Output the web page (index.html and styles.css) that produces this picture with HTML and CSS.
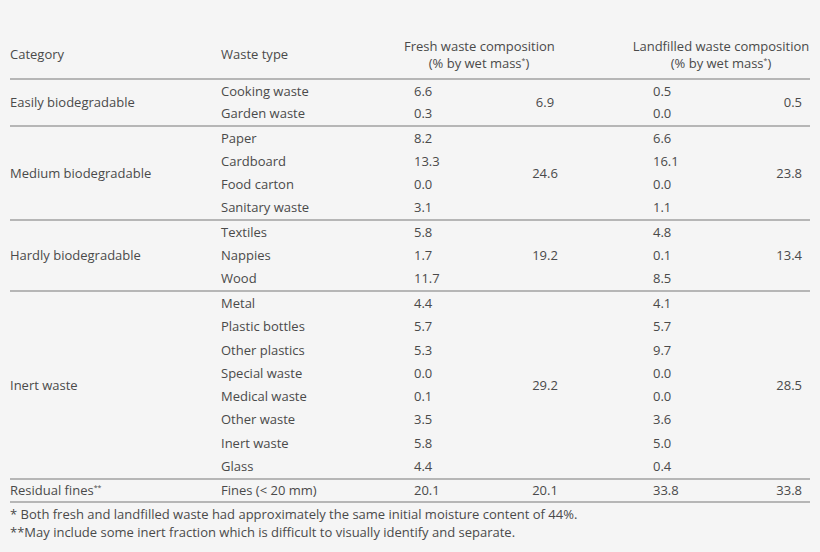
FILE: index.html
```html
<!DOCTYPE html>
<html lang="en">
<head>
<meta charset="utf-8">
<title>Waste composition</title>
<link rel="stylesheet" href="styles.css">
</head>
<body>
<div class="page">
  <div class="comp">
    <div class="row head">
      <div class="cell">Category</div>
      <div class="cell">Waste type</div>
      <div class="cell h-fresh">Fresh waste composition<br>(% by wet mass<sup>*</sup>)</div>
      <div class="cell h-land">Landfilled waste composition<br>(% by wet mass<sup>*</sup>)</div>
    </div>
    <div class="grp g2">
      <div class="cell cat">Easily biodegradable</div>
      <div class="cell fsub">6.9</div>
      <div class="cell lsub">0.5</div>
      <div class="cell">Cooking waste</div><div class="cell ind">6.6</div><div class="cell lind">0.5</div>
      <div class="cell">Garden waste</div><div class="cell ind">0.3</div><div class="cell lind">0.0</div>
    </div>
    <div class="grp g4">
      <div class="cell cat">Medium biodegradable</div>
      <div class="cell fsub">24.6</div>
      <div class="cell lsub">23.8</div>
      <div class="cell">Paper</div><div class="cell ind">8.2</div><div class="cell lind">6.6</div>
      <div class="cell">Cardboard</div><div class="cell ind">13.3</div><div class="cell lind">16.1</div>
      <div class="cell">Food carton</div><div class="cell ind">0.0</div><div class="cell lind">0.0</div>
      <div class="cell">Sanitary waste</div><div class="cell ind">3.1</div><div class="cell lind">1.1</div>
    </div>
    <div class="grp g3">
      <div class="cell cat">Hardly biodegradable</div>
      <div class="cell fsub">19.2</div>
      <div class="cell lsub">13.4</div>
      <div class="cell">Textiles</div><div class="cell ind">5.8</div><div class="cell lind">4.8</div>
      <div class="cell">Nappies</div><div class="cell ind">1.7</div><div class="cell lind">0.1</div>
      <div class="cell">Wood</div><div class="cell ind">11.7</div><div class="cell lind">8.5</div>
    </div>
    <div class="grp g8">
      <div class="cell cat">Inert waste</div>
      <div class="cell fsub">29.2</div>
      <div class="cell lsub">28.5</div>
      <div class="cell">Metal</div><div class="cell ind">4.4</div><div class="cell lind">4.1</div>
      <div class="cell">Plastic bottles</div><div class="cell ind">5.7</div><div class="cell lind">5.7</div>
      <div class="cell">Other plastics</div><div class="cell ind">5.3</div><div class="cell lind">9.7</div>
      <div class="cell">Special waste</div><div class="cell ind">0.0</div><div class="cell lind">0.0</div>
      <div class="cell">Medical waste</div><div class="cell ind">0.1</div><div class="cell lind">0.0</div>
      <div class="cell">Other waste</div><div class="cell ind">3.5</div><div class="cell lind">3.6</div>
      <div class="cell">Inert waste</div><div class="cell ind">5.8</div><div class="cell lind">5.0</div>
      <div class="cell">Glass</div><div class="cell ind">4.4</div><div class="cell lind">0.4</div>
    </div>
    <div class="grp g1">
      <div class="cell cat">Residual fines<sup>**</sup></div>
      <div class="cell fsub">20.1</div>
      <div class="cell lsub">33.8</div>
      <div class="cell">Fines (&lt; 20 mm)</div><div class="cell ind">20.1</div><div class="cell lind">33.8</div>
    </div>
  </div>
  <div class="notes">
    <p>* Both fresh and landfilled waste had approximately the same initial moisture content of 44%.</p>
    <p>**May include some inert fraction which is difficult to visually identify and separate.</p>
  </div>
</div>
</body>
</html>
```
FILE: styles.css
```css
html, body {
  margin: 0;
  padding: 0;
  background: #f5f5f5;
}
body {
  font-family: "Open Sans", "Noto Sans", sans-serif;
  font-size: 13px;
  color: #4a4a4a;
}
.page {
  padding: 31px 10px 0 10px;
  width: 800px;
}
.comp {
  width: 800px;
}
.row,
.grp {
  display: grid;
  grid-template-columns: 211px 183px 96px 90px 130px 90px;
  align-items: center;
  border-bottom: 2px solid #b6b6b6;
}
.cell {
  line-height: 17px;
  white-space: nowrap;
}
.head {
  height: 47px;
}
.head .h-fresh {
  grid-column: 3 / 5;
  text-align: center;
  padding-right: 36px;
}
.head .h-land {
  grid-column: 5 / 7;
  text-align: center;
  padding-left: 42px;
}

.g1 { grid-template-rows: repeat(1, 1fr); height: 21px; }
.g2 { grid-template-rows: repeat(2, 1fr); height: 45px; }
.g3 { grid-template-rows: repeat(3, 1fr); height: 69px; }
.g4 { grid-template-rows: repeat(4, 1fr); height: 92px; }
.g8 { grid-template-rows: repeat(8, 1fr); height: 186px; }

.cat { grid-column: 1; grid-row: 1 / -1; }
.fsub { grid-column: 4; grid-row: 1 / -1; text-align: center; }
.lsub { grid-column: 6; grid-row: 1 / -1; text-align: right; padding-right: 8px; }
.ind { padding-left: 10px; }
.lind { padding-left: 63px; }

sup {
  font-size: 7px;
  line-height: 0;
  vertical-align: 5px;
}

.notes {
  padding-top: 2px;
}
.notes p {
  margin: 0;
  line-height: 18px;
}
```
